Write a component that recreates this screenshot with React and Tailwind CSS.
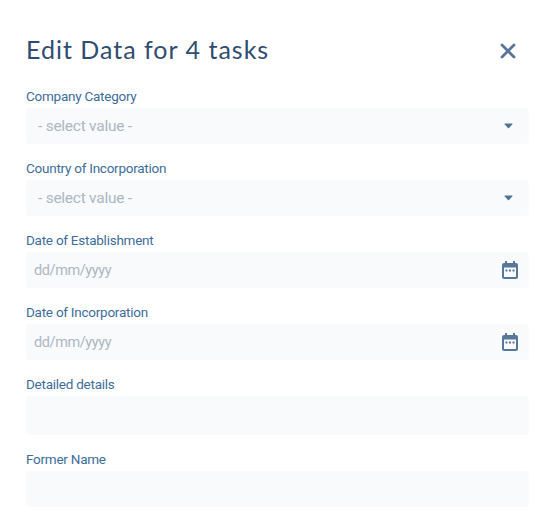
import React from "react";

const labelCls = "h-6 pt-[3px] text-[13.5px] leading-[18px] tracking-[-0.25px] text-[#3d6d9b] font-['Roboto',sans-serif]";

function Caret() {
  return (
    <svg width="9" height="6" viewBox="0 0 9 6" className="text-[#4f7195]">
      <path d="M0.8 0.5 H8.2 Q8.800 0.5 8.400 1.200 L5 5 Q4.500 5.500 4 5 L0.600 1.200 Q0.200 0.500 0.800 0.500 Z" fill="currentColor" />
    </svg>
  );
}

function Calendar() {
  return (
    <svg width="16" height="18" viewBox="0 0 16 18">
      <path
        fillRule="evenodd"
        fill="#56769a"
        d="M3 0h2v2h6V0h2v2h1a2 2 0 0 1 2 2v12a2 2 0 0 1-2 2H2a2 2 0 0 1-2-2V4a2 2 0 0 1 2-2h1zM2 6.500V16h12V6.500z"
      />
      <rect x="3.500" y="8.500" width="2" height="2" fill="#56769a" />
      <rect x="7" y="8.500" width="2" height="2" fill="#56769a" />
      <rect x="10.500" y="8.500" width="2" height="2" fill="#56769a" />
    </svg>
  );
}

function SelectField({ label }) {
  return (
    <div>
      <div className={labelCls}>{label}</div>
      <div className="flex h-9 items-center justify-between rounded-[4px] bg-[#f8fafc] pl-3 pr-4">
        <span className="pt-[2px] text-[15.500px] tracking-[-0.25px] text-[#aeb7c2] font-['Roboto',sans-serif]">- select value -</span>
        <Caret />
      </div>
    </div>
  );
}

function DateField({ label }) {
  return (
    <div>
      <div className={labelCls}>{label}</div>
      <div className="flex h-9 items-center justify-between rounded-[4px] bg-[#f8fafc] pl-2 pr-[11px]">
        <span className="pt-[2px] text-[14.500px] tracking-[-0.4px] text-[#aeb7c2] font-['Roboto',sans-serif]">dd/mm/yyyy</span>
        <Calendar />
      </div>
    </div>
  );
}

export default function App() {
  return (
    <div className="h-[514px] w-[549px] overflow-hidden bg-white pl-[26px] pr-5">
      <div className="flex h-[84px] items-start justify-between pt-[31px]">
        <h1 className="text-[25px] leading-9 tracking-[1px] text-[#2f4d70] font-['Lato',sans-serif]">Edit Data for 4 tasks</h1>
        <button className="mr-[13px] mt-[12px] text-[#56769a]">
          <svg width="16" height="16" viewBox="0 0 16 16">
            <path d="M2 2 L14 14 M14 2 L2 14" stroke="currentColor" strokeWidth="2.800" strokeLinecap="round" />
          </svg>
        </button>
      </div>
      <div className="flex w-[503px] flex-col gap-3">
        <SelectField label="Company Category" />
        <SelectField label="Country of Incorporation" />
        <DateField label="Date of Establishment" />
        <DateField label="Date of Incorporation" />
        <div>
          <div className={labelCls}>Detailed details</div>
          <div className="h-[39px] rounded-[4px] bg-[#f8fafc]" />
        </div>
        <div>
          <div className={labelCls}>Former Name</div>
          <div className="h-9 rounded-[4px] bg-[#f8fafc]" />
        </div>
      </div>
    </div>
  );
}
